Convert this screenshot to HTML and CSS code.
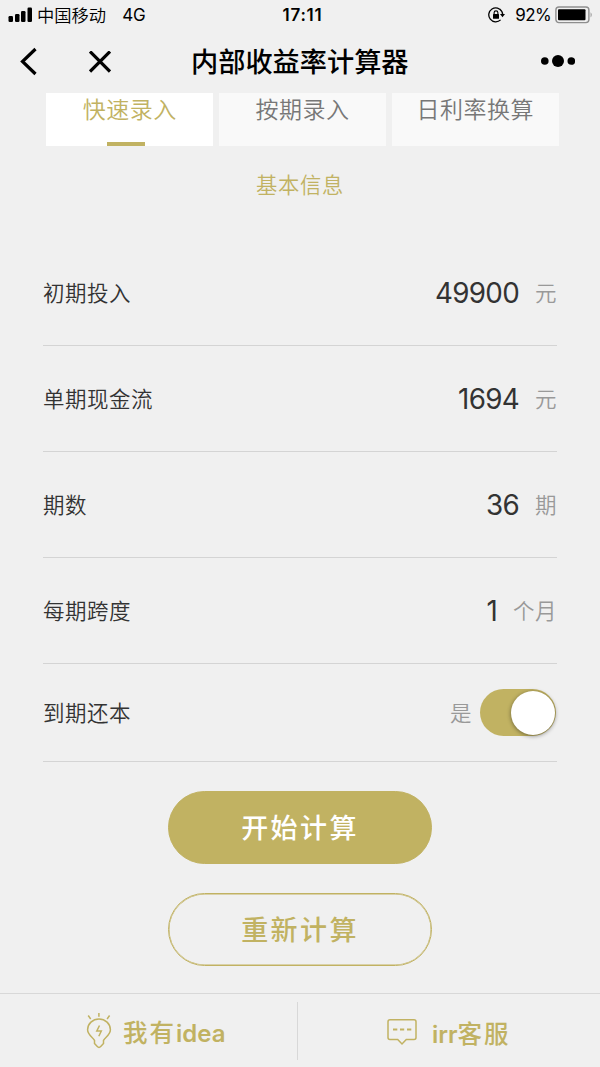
FILE: index.html
```html
<!DOCTYPE html>
<html lang="zh-CN">
<head>
    <meta charset="UTF-8">
    <meta name="viewport" content="width=device-width, initial-scale=1.0">
    <title>内部收益率计算器</title>
    <link rel="stylesheet" href="styles.css">
</head>
<body>
    <div class="statusBar">
        <div class="statusLeft">
            <svg width="24" height="16" viewBox="0 0 24 16">
                <rect x="0.5" y="9" width="4.5" height="6" rx="1.2"/>
                <rect x="7" y="7" width="4.5" height="8" rx="1.2"/>
                <rect x="13" y="4" width="4.5" height="11" rx="1.2"/>
                <rect x="19.5" y="0.5" width="4.5" height="14.5" rx="1.2"/>
            </svg>
            <span class="carrier">中国移动</span>
            <span>4G</span>
        </div>
        <div class="clock">17:11</div>
        <div class="statusRight">
            <svg class="lockIcon" width="18" height="16" viewBox="0 0 18 16">
                <path d="M14 4.6A7 7 0 1 0 12.6 12.9M11.8 2.3A7 7 0 0 1 14.7 8" fill="none" stroke="#000" stroke-width="1.3"/>
                <path d="M12 7h5l-2.5 3.2z"/>
                <rect x="5" y="7" width="6" height="4.7" rx="0.5"/>
                <path d="M6.1 7.5V5.8a1.9 1.9 0 0 1 3.8 0V7.5" fill="none" stroke="#000" stroke-width="1.1"/>
            </svg>
            <span class="percent">92%</span>
            <svg width="38" height="18" viewBox="0 0 38 18">
                <rect x="0.9" y="1" width="33" height="15.6" rx="3" fill="none" stroke="#8e8e8e" stroke-width="1.4"/>
                <rect x="3" y="3.3" width="27.5" height="11" rx="1"/>
                <path d="M35.6 6.2q2.2 2.6 0 5.2z" fill="#8e8e8e"/>
            </svg>
        </div>
    </div>

    <header class="navBar">
        <svg class="backIcon" width="18" height="30" viewBox="0 0 18 30">
            <path d="M16.5 2L3.5 14.5L16.5 27" fill="none" stroke="#000" stroke-width="3.2"/>
        </svg>
        <svg class="closeIcon" width="22" height="22" viewBox="0 0 22 22">
            <path d="M1 0.5L21 20.5M21 0.5L1 20.5" fill="none" stroke="#000" stroke-width="3.2"/>
        </svg>
        <h1>内部收益率计算器</h1>
        <svg class="moreIcon" width="34" height="12" viewBox="0 0 34 12">
            <circle cx="3.8" cy="6" r="3.8"/>
            <circle cx="17" cy="6" r="6"/>
            <circle cx="30.3" cy="6" r="3.8"/>
        </svg>
    </header>

    <nav class="tabs">
        <div class="tab active">快速录入</div>
        <div class="tab">按期录入</div>
        <div class="tab">日利率换算</div>
    </nav>

    <main>
        <h2>基本信息</h2>

        <div class="row">
            <label>初期投入</label>
            <span class="value">49900</span>
            <span class="unit">元</span>
        </div>
        <div class="row">
            <label>单期现金流</label>
            <span class="value">1694</span>
            <span class="unit">元</span>
        </div>
        <div class="row">
            <label>期数</label>
            <span class="value">36</span>
            <span class="unit">期</span>
        </div>
        <div class="row">
            <label>每期跨度</label>
            <span class="value">1</span>
            <span class="unit">个月</span>
        </div>
        <div class="row switchRow">
            <label>到期还本</label>
            <span class="unit">是</span>
            <div class="switch"><div class="knob"></div></div>
        </div>

        <div class="buttons">
            <button class="startBtn">开始计算</button>
            <button class="resetBtn">重新计算</button>
        </div>
    </main>

    <footer>
        <div class="footItem idea">
            <svg width="26" height="38" viewBox="0 0 26 38">
                <path d="M12.9 1V4.7M2.2 3.5L4.7 7M23.6 3.5L21.1 7"/>
                <path d="M8.5 28.3V31.5L11.3 34.5Q13 36.3 14.7 34.5L17.5 31.5V28.3C19 25.3 24.4 23 24.4 17.8A11.4 10.8 0 0 0 1.6 17.8C1.6 23 7 25.3 8.5 28.3Z"/>
                <path d="M13.5 13.5L10.8 19H15.3L12.8 24.3"/>
            </svg>
            <span><span class="zh">我有</span>idea</span>
        </div>
        <div class="footItem service">
            <svg width="30" height="28" viewBox="0 0 30 28">
                <path d="M3 1.7H27Q29 1.7 29 3.7V19.5Q29 21.5 27 21.5H19.3L15 26L10.7 21.5H3Q1 21.5 1 19.5V3.7Q1 1.7 3 1.7Z"/>
                <path d="M6 11.5H10.3M13 11.5H17.2M20 11.5H24.3" stroke-width="1.8"/>
            </svg>
            <span>irr<span class="zh">客服</span></span>
        </div>
    </footer>
</body>
</html>
```
FILE: styles.css
```css
* {
    box-sizing: border-box;
}

body {
    margin: 0;
    height: 1067px;
    display: flex;
    flex-direction: column;
    overflow: hidden;
    background-color: #f0f0f0;
    color: #333;
    font-family: Inter, "Noto Sans CJK SC", sans-serif;
}

h1, h2 {
    margin: 0;
}

.statusBar {
    height: 30px;
    padding: 0 7px 0 8px;
    display: grid;
    grid-template-columns: 1fr auto 1fr;
    align-items: center;
    color: #000;
    font-size: 17px;
}

.statusLeft, .statusRight {
    display: flex;
    align-items: center;
}

.statusRight {
    justify-content: flex-end;
}

.carrier {
    margin: -2px 16px 0 5px;
    font-size: 17.3px;
    font-weight: 350;
}

.clock {
    font-weight: 600;
    padding-left: 4px;
    letter-spacing: 0.8px;
}

.lockIcon {
    margin-right: 9px;
}

.percent {
    margin-right: 4px;
    letter-spacing: -0.6px;
}

.navBar {
    height: 63px;
    padding: 0 25px 0 19px;
    display: flex;
    align-items: center;
    color: #000;
}

.closeIcon {
    margin-left: 52px;
}

.navBar h1 {
    margin-left: 80px;
    padding-top: 2px;
    font-size: 27.2px;
    font-weight: 500;
    line-height: 40px;
}

.moreIcon {
    margin: -2px 0 0 auto;
}

.tabs {
    height: 53px;
    margin: 0 41px 0 46px;
    display: grid;
    grid-template-columns: repeat(3, 1fr);
    gap: 5.5px;
}

.tab {
    display: flex;
    flex-direction: column;
    align-items: center;
    justify-content: space-between;
    background-color: #f9f9f9;
    color: #777;
    font-size: 23px;
    font-weight: 350;
    line-height: 35px;
    letter-spacing: 0.5px;
}

.active {
    background-color: #fff;
    color: #c1b262;
}

.active::after {
    content: "";
    width: 38px;
    height: 4px;
    background-color: #c1b262;
    margin-right: 7px;
}

main {
    flex: 1;
    padding: 24px 43px 0;
}

h2 {
    margin-bottom: 40px;
    color: #c1b262;
    font-size: 21.3px;
    font-weight: 350;
    line-height: 30px;
    letter-spacing: 0.7px;
    text-align: center;
}

.row {
    height: 106.1px;
    display: flex;
    align-items: center;
    border-bottom: 1px solid #d4d4d4;
    font-size: 21.5px;
    font-weight: 350;
    line-height: 30px;
    letter-spacing: 0.5px;
}

.row label {
    margin: 1px auto 0 0;
}

.value {
    font-size: 27.8px;
    font-weight: 400;
    letter-spacing: -0.7px;
}

.unit {
    margin: 0 0 0 16px;
    color: #999;
}

.switchRow {
    height: 98px;
}

.switch {
    width: 76px;
    height: 47px;
    margin: 0 1px 0 8px;
    padding: 1.5px;
    display: flex;
    justify-content: flex-end;
    border-radius: 24px;
    background-color: #c1b262;
}

.knob {
    width: 44px;
    height: 44px;
    border-radius: 50%;
    background-color: #fff;
    box-shadow: 0 1px 4px rgba(0,0,0,0.45);
}

.buttons {
    padding-top: 29px;
    display: flex;
    flex-direction: column;
    align-items: center;
    gap: 29px;
}

button {
    width: 264px;
    height: 73px;
    padding: 0 0 2px;
    border: 1px solid #c1b262;
    border-radius: 37px;
    box-shadow: inset 0 0 0 0.5px #c1b262;
    font-family: inherit;
    font-size: 27px;
    font-weight: 500;
    letter-spacing: 2.4px;
}

.startBtn {
    background-color: #c1b262;
    color: #fff;
}

.resetBtn {
    background-color: transparent;
    color: #c1b262;
}

footer {
    height: 74px;
    display: flex;
    border-top: 1px solid #d8d8d8;
}

.footItem {
    flex: 1;
    display: flex;
    align-items: center;
    color: #c1b262;
    font-size: 24px;
    font-weight: 600;
}

.footItem svg {
    fill: none;
    stroke: #c1b262;
    stroke-width: 1.5;
}

.idea {
    margin: 8px 0 7px;
    padding-left: 86px;
    flex: 0 0 298px;
    gap: 11px;
    border-right: 1.5px solid #d8d8d8;
}

.service {
    padding: 3px 0 0 89px;
    gap: 15px;
}

.zh {
    font-size: 24.5px;
    letter-spacing: 2px;
    font-weight: 500;
}
```
